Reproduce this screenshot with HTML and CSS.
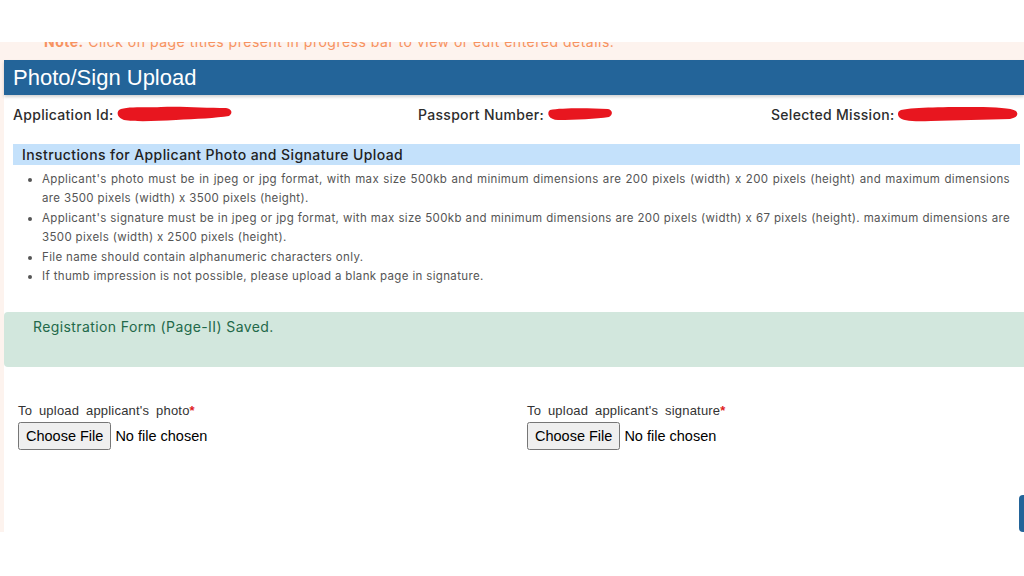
FILE: index.html
```html
<!DOCTYPE html>
<html lang="en">
<head>
  <meta charset="UTF-8">
  <title>Photo/Sign Upload</title>
  <link rel="stylesheet" href="styles.css">
</head>
<body>
  <div class="page">
    <div class="note">
      <p><b>Note:</b> Click on page titles present in progress bar to view or edit entered details.</p>
    </div>

    <div class="card">
      <div class="card-head">Photo/Sign Upload</div>

      <div class="info-row">
        <div class="info">
          <span>Application Id:</span>
          <svg class="redact" width="118" height="18" viewBox="0 0 118 18">
            <path d="M3 5 C10 1 30 3 45 2 C65 1 90 3 110 3 C116 4 117 8 113 11 C100 13 80 14 60 15 C40 16 20 17 8 15 C2 13 0 8 3 5 Z" fill="#e8161f"/>
          </svg>
        </div>
        <div class="info">
          <span>Passport Number:</span>
          <svg class="redact" width="68" height="16" viewBox="0 0 68 16">
            <path d="M4 4 C15 2 40 2 62 3 C67 4 67 9 63 11 C50 13 30 14 12 14 C3 14 0 7 4 4 Z" fill="#e8161f"/>
          </svg>
        </div>
        <div class="info">
          <span>Selected Mission:</span>
          <svg class="redact" width="124" height="18" viewBox="0 0 124 18">
            <path d="M5 5 C20 2 50 2 80 2 C100 2 115 3 120 6 C123 9 121 13 114 14 C90 15 60 15 35 16 C18 17 6 16 3 12 C1 9 2 6 5 5 Z" fill="#e8161f"/>
          </svg>
        </div>
      </div>

      <div class="instructions">
        <div class="instr-title">Instructions for Applicant Photo and Signature Upload</div>
        <ul class="instr-list">
          <li>Applicant's photo must be in jpeg or jpg format, with max size 500kb and minimum dimensions are 200 pixels (width) x 200 pixels (height) and maximum dimensions are 3500 pixels (width) x 3500 pixels (height).</li>
          <li>Applicant's signature must be in jpeg or jpg format, with max size 500kb and minimum dimensions are 200 pixels (width) x 67 pixels (height). maximum dimensions are 3500 pixels (width) x 2500 pixels (height).</li>
          <li>File name should contain alphanumeric characters only.</li>
          <li>If thumb impression is not possible, please upload a blank page in signature.</li>
        </ul>
      </div>

      <div class="alert-success">Registration Form (Page-II) Saved.</div>

      <div class="uploads">
        <div class="upload">
          <label for="photo">To upload applicant's photo<span class="req">*</span></label>
          <input type="file" id="photo">
        </div>
        <div class="upload">
          <label for="sign">To upload applicant's signature<span class="req">*</span></label>
          <input type="file" id="sign">
        </div>
      </div>
    </div>

    <div class="side-tab"></div>
  </div>
</body>
</html>
```

FILE: styles.css
```css
body {
  margin: 0;
  background: #ffffff;
  font-family: 'Inter', 'Liberation Sans', sans-serif;
}
.page {
  position: relative;
  margin-top: 42px;
  height: 490px;
  background: #fdf3ee;
  display: flex;
  flex-direction: column;
}
.note {
  height: 18px;
  overflow: hidden;
}
.note p {
  margin: -10px 0 0 44px;
  font-size: 14px;
  line-height: 20px;
  letter-spacing: 0.5px;
  color: #f79260;
}
.card {
  flex: 1;
  margin-left: 4px;
  background: #ffffff;
}
.card-head {
  height: 35px;
  background: #236499;
  color: #ffffff;
  font-family: 'Liberation Sans', Arial, sans-serif;
  font-size: 22px;
  line-height: 35px;
  padding-left: 9px;
  box-shadow: 0 2px 3px rgba(0, 0, 0, 0.18);
}
.info-row {
  display: grid;
  grid-template-columns: 405px 353px 1fr;
  align-items: center;
  padding: 9px 0 0 9px;
  height: 20px;
}
.info {
  display: flex;
  align-items: center;
  font-size: 14px;
  font-weight: 500;
  letter-spacing: 0.3px;
  color: #2d2d2d;
}
.redact {
  margin-left: 2px;
}
.instructions {
  margin: 20px 4px 0 9px;
}
.instr-title {
  height: 21px;
  line-height: 21px;
  background: #c4e1fb;
  padding-left: 9px;
  font-size: 14px;
  font-weight: 500;
  letter-spacing: 0.4px;
  color: #222222;
}
.instr-list {
  margin: 5px 10px 0 0;
  padding-left: 29px;
  font-size: 11.5px;
  letter-spacing: 0.35px;
  line-height: 19.4px;
  color: #555555;
  text-align: justify;
}
.alert-success {
  margin-top: 26px;
  height: 55px;
  box-sizing: border-box;
  padding: 6px 29px;
  background: #d2e7dd;
  border-radius: 4px 0 0 4px;
  font-size: 14px;
  letter-spacing: 0.4px;
  color: #23694a;
}
.uploads {
  display: grid;
  grid-template-columns: 509px 1fr;
  padding: 36px 0 0 14px;
}
.upload label {
  display: block;
  font-family: 'Liberation Sans', Arial, sans-serif;
  font-size: 13px;
  letter-spacing: 0.2px;
  word-spacing: 3px;
  color: #333333;
  margin-bottom: 4px;
}
.req {
  color: #e01c1c;
  font-weight: bold;
}
.upload input {
  font-family: 'Liberation Sans', Arial, sans-serif;
  font-size: 14.5px;
}
.upload input::file-selector-button {
  padding: 4px 6px;
  margin-right: 4px;
}
.side-tab {
  position: absolute;
  right: 0;
  bottom: 0;
  width: 5px;
  height: 37px;
  background: #236499;
  border-radius: 4px 0 0 4px;
}
```
